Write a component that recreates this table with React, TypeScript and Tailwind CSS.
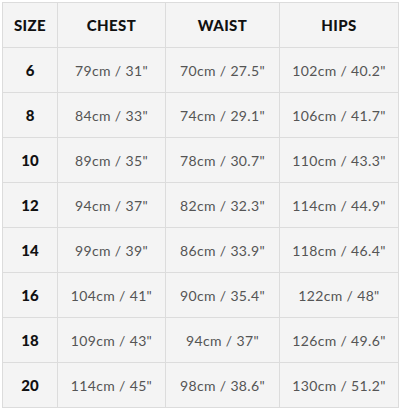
const rows = [
  ["6", "79cm / 31\"", "70cm / 27.5\"", "102cm / 40.2\""],
  ["8", "84cm / 33\"", "74cm / 29.1\"", "106cm / 41.7\""],
  ["10", "89cm / 35\"", "78cm / 30.7\"", "110cm / 43.3\""],
  ["12", "94cm / 37\"", "82cm / 32.3\"", "114cm / 44.9\""],
  ["14", "99cm / 39\"", "86cm / 33.9\"", "118cm / 46.4\""],
  ["16", "104cm / 41\"", "90cm / 35.4\"", "122cm / 48\""],
  ["18", "109cm / 43\"", "94cm / 37\"", "126cm / 49.6\""],
  ["20", "114cm / 45\"", "98cm / 38.6\"", "130cm / 51.2\""],
];

const headers = ["SIZE", "CHEST", "WAIST", "HIPS"];
const widths = ["w-[55px]", "w-[108px]", "w-[114px]", "w-[119px]"];

export default function App() {
  return (
    <div className="bg-white w-[404px] h-[411px] pt-[2px] pl-[2px] font-['Lato',sans-serif]">
      <table className="border-collapse bg-[#f4f4f4] table-fixed w-[396px]">
        <thead>
          <tr className="h-[45px]">
            {headers.map((h, i) => (
              <th
                key={h}
                className={`${widths[i]} border border-[#dcdcdc] text-center text-[15px] font-black text-[#111] tracking-wide`}
              >
                {h}
              </th>
            ))}
          </tr>
        </thead>
        <tbody>
          {rows.map((row) => (
            <tr key={row[0]} className="h-[45px]">
              {row.map((cell, i) => (
                <td
                  key={i}
                  className={
                    i === 0
                      ? "border border-[#dcdcdc] text-center text-[15px] font-black text-[#111]"
                      : "border border-[#dcdcdc] text-center text-[14px] text-[#555] tracking-wide"
                  }
                >
                  {cell}
                </td>
              ))}
            </tr>
          ))}
        </tbody>
      </table>
    </div>
  );
}
